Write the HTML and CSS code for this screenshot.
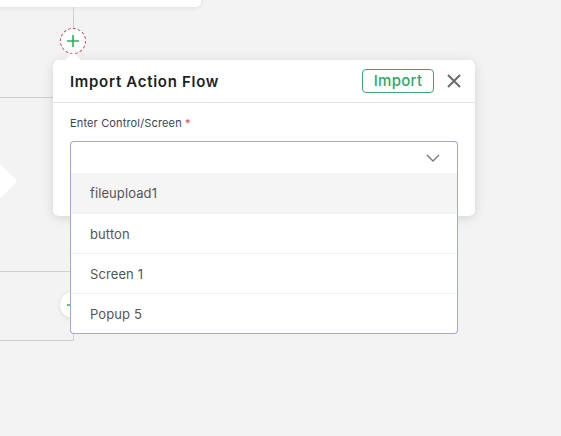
FILE: index.html
```html
<!DOCTYPE html>
<html>
<head>
<meta charset="utf-8">
<link rel="stylesheet" href="styles.css">
</head>
<body>
<div class="canvas">
  <div class="node-card"></div>
  <div class="line line-top"></div>
  <div class="line line-h1"></div>
  <div class="diamond"></div>
  <div class="group-box"></div>
  <div class="add-btn add-dashed">
    <svg width="14" height="14" viewBox="0 0 14 14"><path d="M7 1v12M1 7h12" stroke="#2eae62" stroke-width="1.6" fill="none"/></svg>
  </div>
  <div class="add-btn add-lower">
    <svg width="14" height="14" viewBox="0 0 14 14"><path d="M7 1v12M1 7h12" stroke="#2eae62" stroke-width="1.6" fill="none"/></svg>
  </div>

  <div class="popup">
    <div class="popup-arrow"></div>
    <div class="popup-head">
      <div class="popup-title">Import Action Flow</div>
      <div class="head-actions">
        <button class="btn-import">Import</button>
        <button class="btn-close" aria-label="Close">
          <svg width="16" height="16" viewBox="0 0 16 16"><path d="M2 2l12 12M14 2L2 14" stroke="#6b6b6b" stroke-width="2" fill="none"/></svg>
        </button>
      </div>
    </div>
    <div class="popup-body">
      <div class="field-label">Enter Control/Screen <span class="req">*</span></div>
      <div class="select">
        <div class="select-input">
          <svg class="chev" width="14" height="8" viewBox="0 0 14 8"><path d="M1 1l6 6 6-6" stroke="#6f7c88" stroke-width="1.4" fill="none"/></svg>
        </div>
        <ul class="options">
          <li class="opt active">fileupload1</li>
          <li class="opt">button</li>
          <li class="opt">Screen 1</li>
          <li class="opt">Popup 5</li>
        </ul>
      </div>
    </div>
  </div>
</div>
</body>
</html>
```
FILE: styles.css
```css
* { box-sizing: border-box; }
html, body {
  margin: 0;
  padding: 0;
  width: 561px;
  height: 436px;
  overflow: hidden;
  background: #f3f3f3;
  font-family: "Inter", "Noto Sans", sans-serif;
}
.canvas {
  position: relative;
  width: 561px;
  height: 436px;
}
.node-card {
  position: absolute;
  left: -10px;
  top: -20px;
  width: 211px;
  height: 27px;
  background: #fff;
  border-radius: 5px;
  box-shadow: 0 1px 5px rgba(0,0,0,0.08);
}
.line {
  position: absolute;
  background: #cfcfcf;
}
.line-top {
  left: 73px;
  top: 7px;
  width: 1px;
  height: 22px;
}
.line-h1 {
  left: 0;
  top: 97px;
  width: 60px;
  height: 1px;
}
.diamond {
  position: absolute;
  left: -50px;
  top: 153px;
  width: 56px;
  height: 56px;
  background: #fff;
  transform: rotate(45deg);
  border-radius: 3px;
}
.group-box {
  position: absolute;
  left: -20px;
  top: 271px;
  width: 94px;
  height: 70px;
  border: 1px solid #cfcfcf;
}
.add-btn {
  position: absolute;
  width: 26px;
  height: 26px;
  border-radius: 50%;
  display: flex;
  align-items: center;
  justify-content: center;
  background: #fff;
}
.add-dashed {
  left: 60px;
  top: 28px;
  border: 1.5px dashed #d4424c;
}
.add-lower {
  left: 60px;
  top: 292px;
  box-shadow: 0 1px 4px rgba(0,0,0,0.12);
}
.popup {
  position: absolute;
  left: 53px;
  top: 60px;
  width: 422px;
  height: 156px;
  background: #fff;
  border-radius: 6px;
  box-shadow: 0 2px 12px rgba(0,0,0,0.13);
}
.popup-arrow {
  position: absolute;
  left: 13px;
  top: -5px;
  width: 14px;
  height: 14px;
  background: #fff;
  transform: rotate(45deg);
  border-radius: 3px;
}
.popup-head {
  position: relative;
  height: 43px;
  border-bottom: 1px solid #e3e3e3;
  display: flex;
  align-items: center;
  justify-content: space-between;
  padding: 0 13px 0 17px;
}
.popup-title {
  font-size: 15px;
  font-weight: 600;
  color: #1e1e1e;
  letter-spacing: 0.7px;
  padding-top: 1px;
}
.head-actions {
  display: flex;
  align-items: center;
  gap: 12px;
}
.btn-import {
  height: 24px;
  width: 72px;
  border: 1px solid #3aa86b;
  border-radius: 4px;
  background: #fff;
  color: #2fa866;
  font-family: inherit;
  font-size: 15px;
  font-weight: 500;
  letter-spacing: 0.3px;
  padding: 0;
  line-height: 20px;
}
.btn-close {
  border: 0;
  background: none;
  padding: 0;
  width: 16px;
  height: 16px;
  display: block;
}
.popup-body {
  padding: 13px 17px 0 17px;
}
.field-label {
  font-size: 11px;
  color: #3c4257;
  height: 14px;
  line-height: 14px;
  letter-spacing: 0.15px;
}
.req { color: #e04848; }
.select {
  position: relative;
  margin-top: 11px;
}
.select-input {
  height: 32px;
  border: 1px solid #a4a7d4;
  border-bottom: 0;
  border-radius: 4px 4px 0 0;
  display: flex;
  align-items: center;
  justify-content: flex-end;
  padding-right: 17px;
}
.chev { display: block; }
.options {
  position: absolute;
  left: 0;
  right: 0;
  top: 32px;
  margin: 0;
  padding: 0;
  list-style: none;
  background: #fff;
  border: 1px solid #a4a7d4;
  border-top: 0;
  border-radius: 0 0 4px 4px;
  z-index: 2;
}
.opt {
  height: 40px;
  line-height: 40px;
  padding-left: 19px;
  font-size: 13px;
  color: #555;
  border-top: 1px solid #f1f1f1;
  letter-spacing: 0.1px;
}
.opt.active {
  background: #f5f5f5;
  border-top: 0;
}
```
